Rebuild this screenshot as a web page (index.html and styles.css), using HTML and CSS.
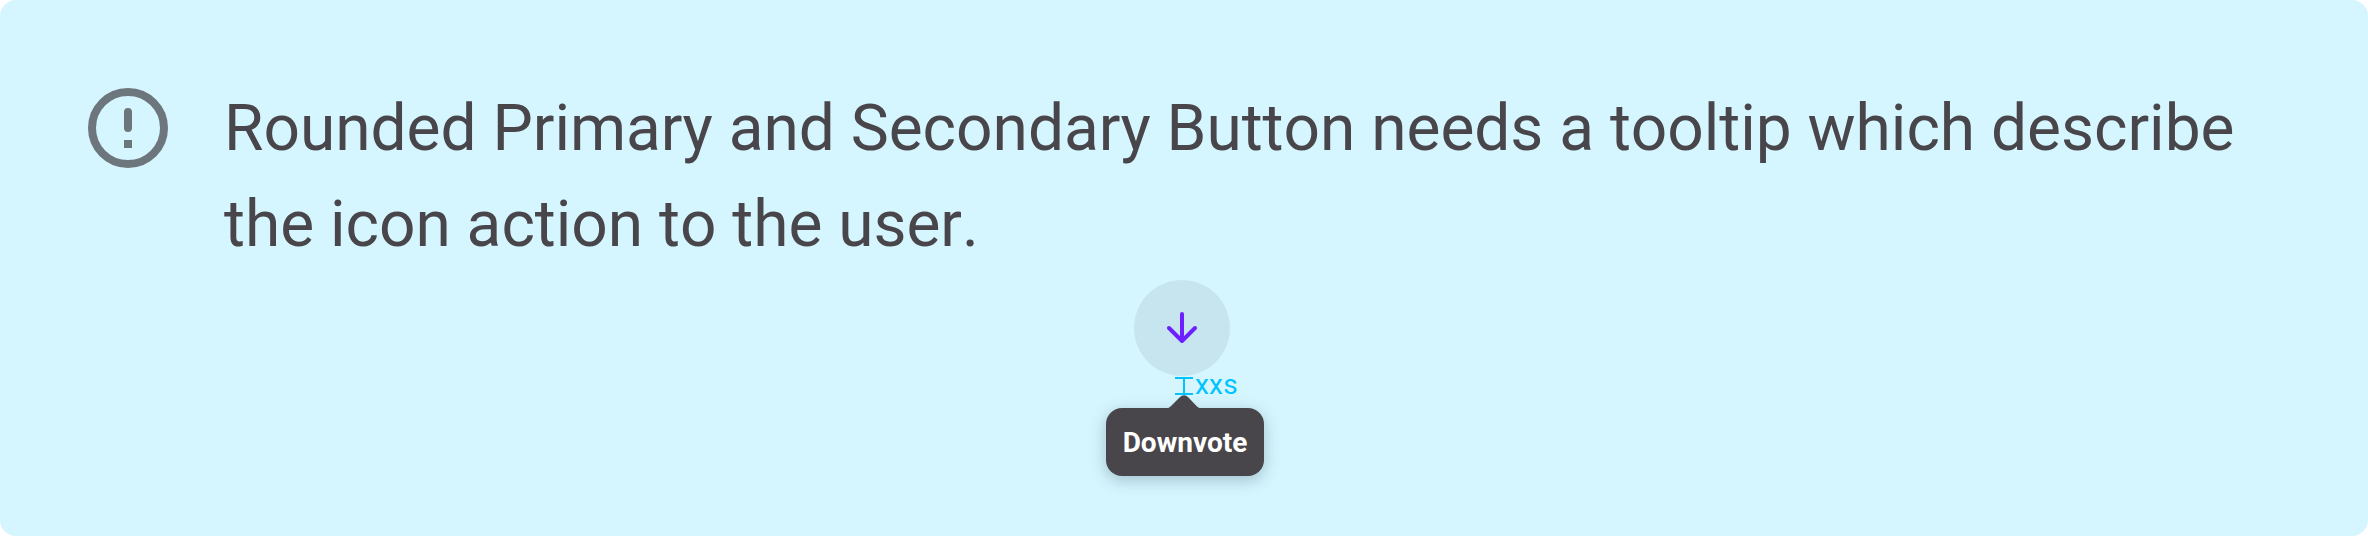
FILE: index.html
```html
<!DOCTYPE html>
<html lang="en">
<head>
<meta charset="utf-8">
<title>Button tooltip note</title>
<link rel="stylesheet" href="styles.css">
</head>
<body>
<section class="note">
  <div class="message">
    <svg class="alert-icon" viewBox="0 0 24 24" aria-hidden="true">
      <circle cx="12" cy="12" r="9" fill="none" stroke="currentColor" stroke-width="2"/>
      <path d="M12 7a1 1 0 0 1 1 1v4a1 1 0 0 1-2 0V8a1 1 0 0 1 1-1zM11 15h2v2h-2z" fill="currentColor"/>
    </svg>
    <p class="text">Rounded Primary and Secondary Button needs a tooltip which describe the icon action to the user.</p>
  </div>
  <div class="example">
    <button class="round-button" aria-label="Downvote">
      <svg class="arrow" viewBox="0 0 48 48" aria-hidden="true">
        <path d="M24 10v27M11 24l13 13 13-13" fill="none" stroke="currentColor" stroke-width="4" stroke-linecap="round" stroke-linejoin="round"/>
      </svg>
    </button>
    <div class="tooltip" role="tooltip">
      <span class="label">Downvote</span>
      <svg class="tail" viewBox="0 0 36 14" aria-hidden="true">
        <path d="M0 14Q2.600 13.500 4.500 11.600L13.500 2.500Q18 -2 22.500 2.500L31 11.600Q33 13.600 36 14z" fill="currentColor"/>
      </svg>
      <div class="measure">
        <svg class="bracket" viewBox="0 0 18 18" aria-hidden="true">
          <path d="M0 0h18v2h-8v14h8v2H0v-2h8V2H0z" fill="currentColor"/>
        </svg>
        <span class="size">xxs</span>
      </div>
    </div>
  </div>
</section>
</body>
</html>
```

FILE: styles.css
```css
body {
  margin: 0;
  background: #fff;
  font-family: Roboto, sans-serif;
}
.note {
  box-sizing: border-box;
  height: 536px;
  padding: 80px;
  border-radius: 16px;
  background: #d5f6ff;
}
.message {
  display: flex;
  align-items: flex-start;
  gap: 48px;
}
.alert-icon {
  flex: none;
  width: 96px;
  height: 96px;
  color: #6e767d;
}
.text {
  margin: 0;
  padding-top: 1px;
  color: #48464a;
  font-size: 64px;
  line-height: 96px;
  letter-spacing: -0.02px;
  font-kerning: none;
}
.example {
  display: flex;
  flex-direction: column;
  align-items: center;
  width: 158px;
  margin: 7px 0 0 1026px;
}
.round-button {
  display: flex;
  align-items: center;
  justify-content: center;
  width: 96px;
  height: 96px;
  margin-right: 6px;
  padding: 0;
  border: 0;
  border-radius: 50%;
  background: #c7e5ef;
  color: #6e1fff;
}
.arrow {
  width: 48px;
  height: 48px;
}
.tooltip {
  position: relative;
  display: flex;
  align-items: center;
  justify-content: center;
  width: 158px;
  height: 68px;
  margin-top: 32px;
  border-radius: 16px;
  background: #48464a;
  box-shadow: 0 4px 16px rgba(40, 70, 85, 0.3);
}
.label {
  padding-top: 2px;
  color: #fff;
  font-size: 28px;
  font-weight: 700;
  line-height: 36px;
}
.tail {
  position: absolute;
  left: 60px;
  top: -13px;
  width: 36px;
  height: 14px;
  color: #48464a;
}
.measure {
  position: absolute;
  left: 69px;
  top: -31px;
  display: flex;
  align-items: center;
  gap: 2px;
  height: 18px;
  color: #00c3ff;
}
.bracket {
  flex: none;
  width: 18px;
  height: 18px;
}
.size {
  font-size: 28px;
  line-height: 18px;
  letter-spacing: 0.2px;
  transform: translateY(-1px);
}
```
